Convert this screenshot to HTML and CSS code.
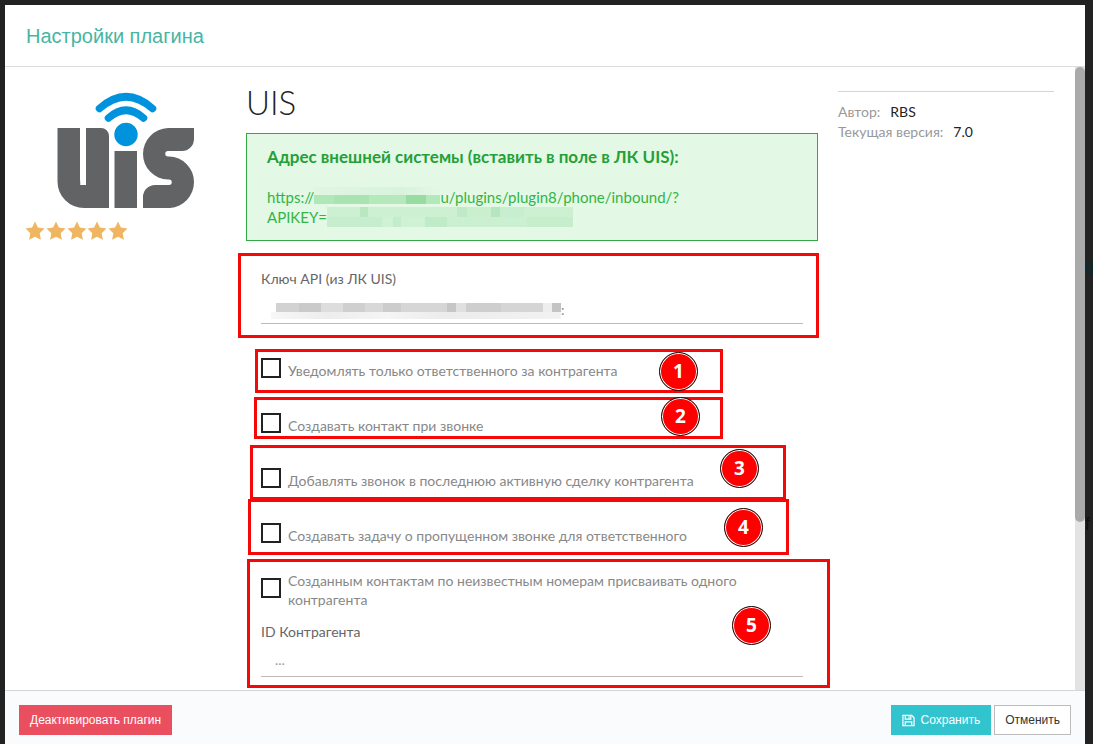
FILE: index.html
```html
<!DOCTYPE html>
<html lang="ru">
<head>
<meta charset="utf-8">
<title>Настройки плагина</title>
<link rel="stylesheet" href="styles.css">
</head>
<body>
<div class="backdrop" aria-hidden="true"><span class="ghost ghost-g">g</span><span class="ghost ghost-f">f</span></div>
<div class="modal" role="dialog" aria-labelledby="modal-title">
  <header class="modal-header"><h1 id="modal-title" class="modal-title">Настройки плагина</h1></header>
  <div class="modal-body">
    <div class="content">
      <aside class="brand">
        <svg class="logo" viewBox="26 83 200 132" role="img" aria-label="UIS">
          <g fill="#616365">
            <path d="M57.500 128H80V179a6 6 0 0 0 6 6V128H101a8 8 0 0 1 8 8V208H84A26.500 26.500 0 0 1 57.500 181.500Z"/>
            <path d="M114.500 151H137V208H114.500Z"/>
            <path d="M194 128V139A12 12 0 0 1 182 151H168a2.700 2.700 0 0 0 0 5.500H169A25.500 25.500 0 0 1 194 182A26 26 0 0 1 170 208H143V197A12 12 0 0 1 155 185H169a2.700 2.700 0 0 0 0-5.500H168A25.500 25.500 0 0 1 143 154A26 26 0 0 1 168 128Z"/>
          </g>
          <path d="M83 127V185" stroke="#fff" stroke-width="5.500" fill="none"/>
          <circle cx="126" cy="134.500" r="11.700" fill="#0093dd"/>
          <g fill="none" stroke="#0093dd" stroke-width="7.500" stroke-linecap="round">
            <path d="M99.500 108.500Q126 85 152.500 108.500"/>
            <path d="M108.500 118Q126 102.500 143.500 118"/>
          </g>
        </svg>
        <div class="stars" role="img" aria-label="Оценка: 5 из 5">
          <svg viewBox="1 0 19 19"><path d="M10 .5l2.900 6.100 6.600.9-4.800 4.700 1.200 6.600L10 15.700l-5.900 3.100 1.200-6.600L.5 7.500l6.600-.9z"/></svg>
          <svg viewBox="1 0 19 19"><path d="M10 .5l2.900 6.100 6.600.9-4.800 4.700 1.200 6.600L10 15.700l-5.900 3.100 1.200-6.600L.5 7.500l6.600-.9z"/></svg>
          <svg viewBox="1 0 19 19"><path d="M10 .5l2.900 6.100 6.600.9-4.800 4.700 1.200 6.600L10 15.700l-5.900 3.100 1.200-6.600L.5 7.500l6.600-.9z"/></svg>
          <svg viewBox="1 0 19 19"><path d="M10 .5l2.900 6.100 6.600.9-4.800 4.700 1.200 6.600L10 15.700l-5.900 3.100 1.200-6.600L.5 7.500l6.600-.9z"/></svg>
          <svg viewBox="1 0 19 19"><path d="M10 .5l2.900 6.100 6.600.9-4.800 4.700 1.200 6.600L10 15.700l-5.900 3.100 1.200-6.600L.5 7.500l6.600-.9z"/></svg>
        </div>
      </aside>
      <main class="settings">
        <h2 class="plugin-name">UIS</h2>
        <section class="notice">
          <h3 class="notice-title">Адрес внешней системы (вставить в поле в ЛК UIS):</h3>
          <p class="notice-url">https://<span class="mask mask-host"></span>u/plugins/plugin8/phone/inbound/?<br>APIKEY=<span class="mask mask-key"></span></p>
        </section>
        <form class="form">
          <div class="field field-api">
            <label class="field-label" for="api-key">Ключ API (из ЛК UIS)</label>
            <input class="field-input" id="api-key" type="text">
            <span class="value-mask"><span class="value-blocks"></span>:</span>
            <span class="mark mark-api"></span>
          </div>
          <div class="option">
            <input class="checkbox" type="checkbox" id="o1"><label class="option-label" for="o1">Уведомлять только ответственного за контрагента</label>
            <span class="mark mark-1"><b class="badge">1</b></span>
          </div>
          <div class="option">
            <input class="checkbox" type="checkbox" id="o2"><label class="option-label" for="o2">Создавать контакт при звонке</label>
            <span class="mark mark-2"><b class="badge">2</b></span>
          </div>
          <div class="option">
            <input class="checkbox" type="checkbox" id="o3"><label class="option-label" for="o3">Добавлять звонок в последнюю активную сделку контрагента</label>
            <span class="mark mark-3"><b class="badge">3</b></span>
          </div>
          <div class="option">
            <input class="checkbox" type="checkbox" id="o4"><label class="option-label" for="o4">Создавать задачу о пропущенном звонке для ответственного</label>
            <span class="mark mark-4"><b class="badge">4</b></span>
          </div>
          <div class="group">
            <div class="option">
              <input class="checkbox" type="checkbox" id="o5"><label class="option-label" for="o5">Созданным контактам по неизвестным номерам присваивать одного контрагента</label>
            </div>
            <div class="field">
              <label class="field-label" for="agent-id">ID Контрагента</label>
              <input class="field-input" id="agent-id" type="text" placeholder="...">
            </div>
            <span class="mark mark-5"><b class="badge">5</b></span>
          </div>
        </form>
      </main>
      <aside class="meta">
        <dl class="meta-list">
          <div class="meta-row"><dt>Автор:</dt><dd>RBS</dd></div>
          <div class="meta-row"><dt>Текущая версия:</dt><dd>7.0</dd></div>
        </dl>
      </aside>
    </div>
    <div class="scrollbar"><div class="thumb"></div></div>
  </div>
  <footer class="modal-footer">
    <button class="btn btn-danger" type="button">Деактивировать плагин</button>
    <div class="actions">
      <button class="btn btn-primary" type="button"><svg class="save-icon" viewBox="0 0 14 14" aria-hidden="true"><path d="M1 1.500h9.500l2.500 2.500V12.500H1zM3.500 1.500v4h6v-4M7.500 2.500v2M3.500 12.500v-4h7v4" fill="none" stroke="#fff" stroke-width="1.300"/></svg>Сохранить</button>
      <button class="btn btn-default" type="button">Отменить</button>
    </div>
  </footer>
</div>
</body>
</html>
```
FILE: styles.css
```css
* { box-sizing: border-box; }
body {
  margin: 0;
  background: #222;
  font: 14px/20px Lato, "Liberation Sans", sans-serif;
  color: #888;
}
h1, h2, h3, p, dl, dd { margin: 0; font-weight: normal; }
.backdrop { position: fixed; inset: 0; font: 18px/20px "Liberation Sans", sans-serif; }
.ghost { position: absolute; left: calc(100% - 8px); color: #062b30; }
.ghost-g { top: 256px; }
.ghost-f { top: 514px; color: #111; }
.modal {
  position: relative;
  display: flex;
  flex-direction: column;
  height: calc(100vh - 5px);
  margin: 5px 8px 0 5px;
  background: #fff;
}
.modal-header { padding: 16px 21px 15px; border-bottom: 1px solid #ddd; }
.modal-title { font: 20px/30px "Liberation Sans", sans-serif; color: #48b5a4; }
.modal-body { flex: 1; min-height: 0; display: flex; overflow: hidden; }
.content {
  flex: 1;
  display: grid;
  grid-template-columns: 200px 1fr 216px;
  gap: 20px;
  padding: 16px 21px 0;
}
.scrollbar { width: 10px; background: #e3e3e3; }
.thumb { height: 73%; border-radius: 5px; background: #aaa; }
.logo { display: block; width: 100%; }
.stars { display: flex; justify-content: space-between; width: 102px; margin-top: 6px; }
.stars svg { width: 19px; height: 19px; fill: #f0b561; overflow: visible; }
.plugin-name { font-size: 33px; font-weight: 300; line-height: 38px; margin-bottom: 12px; color: #222; }
.notice { padding: 13px 20px; border: 1px solid #32a846; background: #e4f8e6; color: #32b545; }
.notice-title { font-size: 17px; font-weight: 700; line-height: 20px; margin-bottom: 20px; color: #24a038; }
.notice-url { font-size: 15px; }
.mask { display: inline-block; vertical-align: top; }
.mask-host {
  width: 126px;
  height: 20px;
  background:
    linear-gradient(90deg, #b0e7b8 0 20px, #a9e3b2 20px 55px, #b5e9bc 55px 92px, #98dca4 92px 112px, #b3e8ba 112px) 0 8px / 100% 9px no-repeat,
    linear-gradient(90deg, #e0f6e3, #d8f3dc 70%, #e4f8e6) 0 0 / 100% 8px no-repeat;
}
.mask-key {
  width: 246px;
  height: 20px;
  background:
    linear-gradient(90deg, #cdf0d2 0 33px, #b8e7c0 33px 41px, #cdf0d2 41px 130px, #c0eac7 130px 140px, #c9efcf 140px 164px, #b6e6bf 164px 173px, #c7eece 173px 197px, #ccf0d1 197px) 0 0 / 100% 10px no-repeat,
    linear-gradient(90deg, #c6edcd 0 55px, #cff1d4 55px 66px, #c3ecca 66px 74px, #cff1d4 74px 98px, #c0ebc8 98px 120px, #cbf0d1 120px 200px, #c6edcc 200px) 0 10px / 100% 10px no-repeat;
}
.form { padding: 28px 15px 0; }
.field { position: relative; }
.field-api { margin-bottom: 16px; }
.field-label { display: block; line-height: 20px; color: #666; }
.field-input {
  display: block;
  width: 100%;
  height: 35px;
  padding: 0 14px;
  border: 0;
  border-bottom: 1px solid #bbb;
  background: transparent;
  font: inherit;
  color: #777;
}
.field-input::placeholder { color: #999; }
.value-mask { position: absolute; left: 10px; bottom: 4px; display: flex; line-height: 20px; }
.value-blocks {
  width: 290px;
  height: 20px;
  background:
    linear-gradient(90deg, #fff 0 5px, #d2d2d2 5px 28px, #cacaca 28px 50px, #ddd 50px 72px, #cfcfcf 72px 94px, #d8d8d8 94px 112px, #ccc 112px 130px, #d6d6d6 130px 176px, #c6c6c6 176px 185px, #e0e0e0 185px 195px, #cecece 195px 230px, #d5d5d5 230px 272px, #eee 272px 281px, #c4c4c4 281px) 0 3px / 100% 9px no-repeat,
    linear-gradient(90deg, #f7f7f7, #ededed 20%, #f5f5f5 40%, #ececec 60%, #f2f2f2) 0 11px / 100% 8px no-repeat;
}
.option { position: relative; display: flex; align-items: center; gap: 7px; height: 55px; }
.checkbox { appearance: none; flex: none; width: 20px; height: 20px; margin: 0; border: 2px solid #222; background: #fff; }
.option-label { padding: 5px 40px 0 0; line-height: 19px; }
.group { position: relative; }
.group .field { margin-top: 7px; }
.mark {
  position: absolute;
  display: flex;
  align-items: center;
  justify-content: flex-end;
  border: 3px solid #f50808;
  pointer-events: none;
}
.mark-api { inset: -16px -16px -14px -23px; }
.mark-1 { inset: 9px 80px 2px -6px; padding-right: 22px; }
.mark-2 { inset: 2px 80px 11px -7px; padding: 0 20px 4px 0; }
.mark-3 { inset: -5px 17px 5px -11px; padding: 0 24px 8px 0; }
.mark-4 { inset: -6px 14px 5px -13px; padding-right: 23px; }
.mark-5 { inset: -1px -27px -11px -14px; padding: 4px 56px 0 0; }
.badge {
  flex: none;
  width: 39px;
  height: 39px;
  border: 1px solid #111;
  border-radius: 50%;
  background: #f00;
  box-shadow: inset 0 0 0 1px #fff;
  color: #fff;
  font: 700 19px/36px "Noto Sans", sans-serif;
  text-align: center;
}
.meta { padding-top: 8px; }
.meta-list { padding-top: 10px; border-top: 1px solid #d5d5d5; }
.meta-row { display: flex; gap: 10px; }
.meta dt { color: #999; }
.meta dd { color: #222; }
.modal-footer {
  display: flex;
  justify-content: space-between;
  padding: 14px 14px 9px;
  border-top: 1px solid #d5d5d5;
  background: #f9fbfc;
}
.actions { display: flex; gap: 3px; }
.btn {
  display: flex;
  align-items: center;
  gap: 6px;
  height: 30px;
  padding: 0 10px;
  border: 1px solid;
  font: 12px/18px "Liberation Sans", sans-serif;
  color: #fff;
}
.btn-danger { background: #ea4f5f; border-color: #ea4f5f; }
.btn-primary { background: #31c4cf; border-color: #31c4cf; }
.btn-default { background: #fff; border-color: #bbb; color: #333; }
.save-icon { width: 13px; height: 13px; }
```
